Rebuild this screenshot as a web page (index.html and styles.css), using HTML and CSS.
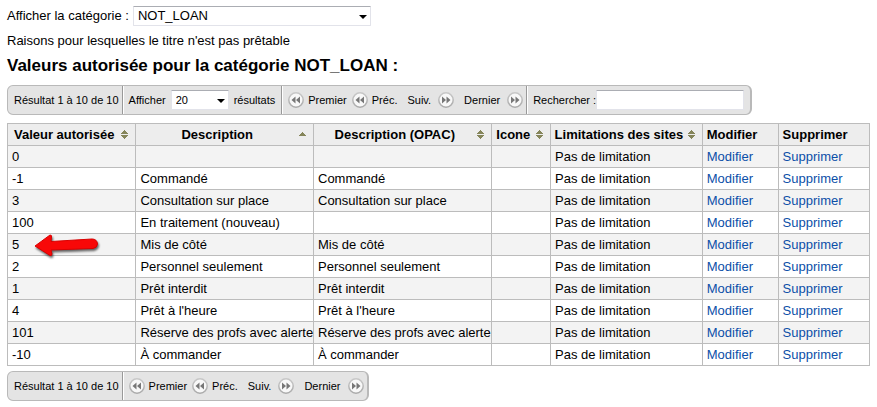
FILE: index.html
```html
<!DOCTYPE html>
<html lang="fr">
<head>
<meta charset="utf-8">
<title>Valeurs autorisées</title>
<link rel="stylesheet" href="styles.css">
</head>
<body>
<svg class="defs" aria-hidden="true">
  <defs>
    <linearGradient id="rim" x1="0" y1="0" x2="0" y2="1"><stop offset="0" stop-color="#c8c8c8"/><stop offset="1" stop-color="#aaa"/></linearGradient>
    <symbol id="back" viewBox="0 0 16 16">
      <circle cx="8" cy="8" r="7.2" fill="#f8f8f8" stroke="url(#rim)" stroke-width="1.5"/>
      <path d="M7.500 4.500v7L3.500 8zM12 4.500v7L8 8z" fill="#777"/>
    </symbol>
    <symbol id="forward" viewBox="0 0 16 16">
      <circle cx="8" cy="8" r="7.2" fill="#f8f8f8" stroke="url(#rim)" stroke-width="1.5"/>
      <path d="M4 4.500v7L8 8zM8.500 4.500v7L12.500 8z" fill="#777"/>
    </symbol>
    <symbol id="both" viewBox="0 0 7 9"><path d="M3 0h1v1h1v1h1v1h1v1H0V3h1V2h1V1h1zM0 5h7v1H6v1H5v1H4v1H3V8H2V7H1V6H0z" fill="#85855a"/></symbol>
    <symbol id="up" viewBox="0 0 7 9"><path d="M3 2h1v1h1v1h1v1h1v1H0V5h1V4h1V3h1z" fill="#85855a"/></symbol>
  </defs>
</svg>

<form class="category">
  <label for="category">Afficher la catégorie :</label>
  <span class="select"><select id="category"><option>NOT_LOAN</option></select></span>
</form>
<p class="note">Raisons pour lesquelles le titre n'est pas prêtable</p>
<h1>Valeurs autorisée pour la catégorie NOT_LOAN :</h1>

<div class="pager">
  <div class="part info">Résultat 1 à 10 de 10</div>
  <div class="part length">
    <label for="length">Afficher</label>
    <span class="select"><select id="length"><option>20</option></select></span>
    <span>résultats</span>
  </div>
  <div class="part nav">
    <button type="button"><svg><use href="#back"/></svg>Premier</button>
    <button type="button"><svg><use href="#back"/></svg>Préc.</button>
    <button type="button" class="next">Suiv.<svg><use href="#forward"/></svg></button>
    <button type="button" class="next">Dernier<svg><use href="#forward"/></svg></button>
  </div>
  <div class="part search">
    <label for="search">Rechercher :</label>
    <input id="search" type="text">
  </div>
</div>

<table>
  <colgroup><col class="value"><col class="text"><col class="text"><col class="icon"><col class="limits"><col class="edit"><col class="delete"></colgroup>
  <thead>
    <tr>
      <th><span class="head">Valeur autorisée<svg><use href="#both"/></svg></span></th>
      <th><span class="head">Description<svg><use href="#up"/></svg></span></th>
      <th><span class="head">Description (OPAC)<svg><use href="#both"/></svg></span></th>
      <th><span class="head">Icone<svg><use href="#both"/></svg></span></th>
      <th><span class="head">Limitations des sites<svg><use href="#both"/></svg></span></th>
      <th>Modifier</th>
      <th>Supprimer</th>
    </tr>
  </thead>
  <tbody>
    <tr><td>0</td><td></td><td></td><td></td><td>Pas de limitation</td><td><a href="#">Modifier</a></td><td><a href="#">Supprimer</a></td></tr>
    <tr><td>-1</td><td>Commandé</td><td>Commandé</td><td></td><td>Pas de limitation</td><td><a href="#">Modifier</a></td><td><a href="#">Supprimer</a></td></tr>
    <tr><td>3</td><td>Consultation sur place</td><td>Consultation sur place</td><td></td><td>Pas de limitation</td><td><a href="#">Modifier</a></td><td><a href="#">Supprimer</a></td></tr>
    <tr><td>100</td><td>En traitement (nouveau)</td><td></td><td></td><td>Pas de limitation</td><td><a href="#">Modifier</a></td><td><a href="#">Supprimer</a></td></tr>
    <tr><td class="marked">5<svg class="arrow" viewBox="0 0 68 26" aria-hidden="true"><path d="M2 13L17 2Q19 2 18.500 4L18 8.500L59 6Q64 6 64.500 11Q64 15 60 15.500L18 17L19 21Q19 23 17 22.500Z" fill="#f80808" stroke="#d80000"/></svg></td><td>Mis de côté</td><td>Mis de côté</td><td></td><td>Pas de limitation</td><td><a href="#">Modifier</a></td><td><a href="#">Supprimer</a></td></tr>
    <tr><td>2</td><td>Personnel seulement</td><td>Personnel seulement</td><td></td><td>Pas de limitation</td><td><a href="#">Modifier</a></td><td><a href="#">Supprimer</a></td></tr>
    <tr><td>1</td><td>Prêt interdit</td><td>Prêt interdit</td><td></td><td>Pas de limitation</td><td><a href="#">Modifier</a></td><td><a href="#">Supprimer</a></td></tr>
    <tr><td>4</td><td>Prêt à l'heure</td><td>Prêt à l'heure</td><td></td><td>Pas de limitation</td><td><a href="#">Modifier</a></td><td><a href="#">Supprimer</a></td></tr>
    <tr><td>101</td><td>Réserve des profs avec alerte</td><td>Réserve des profs avec alerte</td><td></td><td>Pas de limitation</td><td><a href="#">Modifier</a></td><td><a href="#">Supprimer</a></td></tr>
    <tr><td>-10</td><td>À commander</td><td>À commander</td><td></td><td>Pas de limitation</td><td><a href="#">Modifier</a></td><td><a href="#">Supprimer</a></td></tr>
  </tbody>
</table>

<div class="pager">
  <div class="part info">Résultat 1 à 10 de 10</div>
  <div class="part nav">
    <button type="button"><svg><use href="#back"/></svg>Premier</button>
    <button type="button"><svg><use href="#back"/></svg>Préc.</button>
    <button type="button" class="next">Suiv.<svg><use href="#forward"/></svg></button>
    <button type="button" class="next">Dernier<svg><use href="#forward"/></svg></button>
  </div>
</div>
</body>
</html>
```
FILE: styles.css
```css
* { box-sizing: border-box; }
body {
  margin: 6px 7px;
  background: #fff;
  color: #000;
  font: 13px/16px "Liberation Sans", Arial, sans-serif;
}
.defs { position: absolute; width: 0; height: 0; }
.category { display: flex; align-items: center; gap: 4px; }
.select { position: relative; display: inline-flex; }
.select::after {
  content: "";
  position: absolute;
  right: 4px;
  top: 50%;
  margin-top: -1px;
  border: 4px solid transparent;
  border-top-color: #000;
  border-bottom: 0;
  pointer-events: none;
}
select, input {
  appearance: none;
  margin: 0;
  border: 1px solid #e2e3ea;
  border-top-color: #abadb3;
  border-radius: 1px;
  padding: 0 4px;
  background: #fff;
  color: #000;
  font: inherit;
  height: 20px;
}
#category { width: 238px; }
.note { margin: 7px 0; }
h1 { margin: 0 0 9px; font-size: 17px; line-height: 20px; }

.pager {
  display: flex;
  width: fit-content;
  height: 30px;
  border: 1px solid #b9b9b9;
  border-right-width: 2px;
  border-radius: 6px;
  background: #e4e4e4;
  font-size: 11px;
  white-space: nowrap;
}
.part { display: flex; align-items: center; padding: 0 6px; }
.part + .part { border-left: 1px solid #999; box-shadow: inset 1px 0 #fff; }
.info { padding-right: 3px; }
.length { gap: 5px; }
#length { width: 58px; }
.nav { gap: 5px; padding-right: 3px; }
.nav button {
  display: flex;
  align-items: center;
  gap: 4px;
  margin: 0;
  border: 0;
  padding: 0;
  background: none;
  color: #000;
  font: inherit;
}
.nav .next { gap: 7px; padding-left: 5px; }
.nav svg { width: 16px; height: 16px; }
#search { width: 148px; }

table {
  width: 100%;
  margin: 8px 0 5px;
  border-collapse: collapse;
  table-layout: fixed;
}
.value { width: 14.9%; }
.text { width: 20.6%; }
.icon { width: 6.9%; }
.limits { width: 17.6%; }
.edit { width: 8.8%; }
.delete { width: 10.6%; }
th, td {
  height: 22px;
  border: 1px solid #bcbcbc;
  padding: 2px 4px;
  text-align: left;
  white-space: nowrap;
}
th { background: #ededed; }
tbody tr:nth-child(odd) { background: #f3f3f3; }
.head { display: flex; align-items: center; justify-content: center; position: relative; padding-right: 15px; }
.head svg { position: absolute; right: 3px; width: 7px; height: 9px; }
a { color: #0b4fa8; text-decoration: none; }
.marked { position: relative; }
.arrow {
  position: absolute;
  left: 25px;
  top: -1px;
  width: 68px;
  height: 26px;
  filter: drop-shadow(1px 2px 1px rgba(0, 0, 0, .6));
}
```
